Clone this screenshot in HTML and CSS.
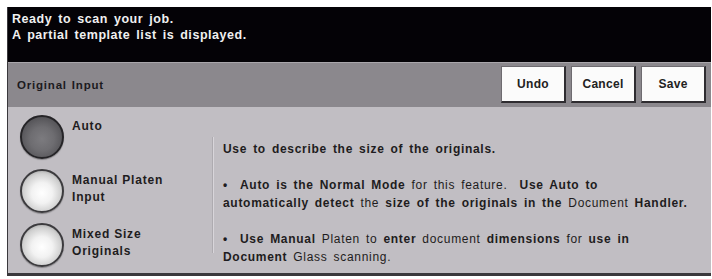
FILE: index.html
```html
<!DOCTYPE html>
<html>
<head>
<meta charset="utf-8">
<link rel="stylesheet" href="styles.css">
</head>
<body>
<div class="screen">
  <div class="status">
    <div>Ready to scan your job.</div>
    <div>A partial template list is displayed.</div>
  </div>
  <div class="header">
    <div class="title">Original Input</div>
    <div class="buttons">
      <div class="btn">Undo</div>
      <div class="btn">Cancel</div>
      <div class="btn">Save</div>
    </div>
  </div>
  <div class="body">
    <div class="options">
      <div class="opt">
        <div class="radio on"></div>
        <div class="label">Auto</div>
      </div>
      <div class="opt">
        <div class="radio"></div>
        <div class="label">Manual Platen<br>Input</div>
      </div>
      <div class="opt">
        <div class="radio"></div>
        <div class="label">Mixed Size<br>Originals</div>
      </div>
    </div>
    <div class="divider"></div>
    <div class="desc">
      <p>Use to describe the size of the originals.</p>
      <p><span class="dot">&bull;</span><b>Auto is the Normal Mode</b> <span class="reg">for this feature.</span>&nbsp; <b>Use Auto to</b><br><b>automatically detect</b> <span class="reg">the</span> <b>size of the originals in the</b> <span class="reg">Document</span> <b>Handler.</b></p>
      <p><span class="dot">&bull;</span><b>Use Manual</b> <span class="reg">Platen to</span> <b>enter</b> <span class="reg">document</span> <b>dimensions</b> <span class="reg">for</span> <b>use in</b><br><b>Document</b> <span class="reg">Glass scanning.</span></p>
    </div>
  </div>
</div>
</body>
</html>
```
FILE: styles.css
```css
html, body {
  margin: 0;
  padding: 0;
  background: #ffffff;
}
body {
  font-family: "Liberation Sans", Arial, sans-serif;
  font-size: 12px;
}
.screen {
  margin: 7px 2px 0 7px;
  width: 703px;
  border-left: 1px solid #3a383c;
  border-bottom: 3px solid #3a383c;
}
.status {
  background: #040206;
  color: #f0f0f0;
  font-weight: bold;
  font-size: 12.5px;
  letter-spacing: 0.55px;
  word-spacing: 2px;
  height: 56px;
  box-sizing: border-box;
  padding: 4px 0 0 4px;
  line-height: 16px;
  border-bottom: 1px solid #a9a6ab;
}
.header {
  background: #8b888d;
  height: 44px;
  display: flex;
  align-items: center;
  justify-content: space-between;
  padding: 0 5px 0 9px;
}
.title {
  color: #1c1a1e;
  font-weight: bold;
  font-size: 11.5px;
  letter-spacing: 0.8px;
  word-spacing: 1px;
}
.buttons {
  display: flex;
  gap: 5px;
  padding-bottom: 2px;
}
.btn {
  width: 62px;
  height: 34px;
  background: #fbfbfb;
  border: 1px solid #6e6b70;
  border-right: 2px solid #2e2c30;
  border-bottom: 2px solid #2e2c30;
  display: flex;
  align-items: center;
  justify-content: center;
  font-weight: bold;
  color: #222;
  font-size: 12px;
  letter-spacing: 0.3px;
}
.body {
  background: #c1bec3;
  height: 166px;
  display: flex;
}
.options {
  width: 192px;
  padding: 8px 0 0 12px;
  display: flex;
  flex-direction: column;
  gap: 8px;
}
.opt {
  display: flex;
  height: 46px;
}
.radio {
  flex: none;
  width: 44px;
  height: 44px;
  border-radius: 50%;
  box-sizing: border-box;
  border: 2px solid #3c3b3e;
  background: radial-gradient(circle at 50% 55%, #ffffff 0%, #f2f2f2 35%, #cfcfcf 65%, #8e8e8e 90%);
  box-shadow: 0 1px 1px rgba(0,0,0,0.3);
}
.radio.on {
  border-color: #252427;
  background: radial-gradient(circle at 50% 55%, #7c7b7f 0%, #6e6d71 40%, #58575b 70%, #3a393d 95%);
}
.label {
  margin-left: 8px;
  font-weight: bold;
  color: #1e1c20;
  line-height: 17px;
  padding-top: 3px;
  letter-spacing: 0.8px;
}
.divider {
  width: 1px;
  margin: 30px 0 20px 0;
  background: #d8d5da;
  border-left: 1px solid #aeabb0;
}
.desc {
  padding: 33px 0 0 9px;
  color: #1e1c20;
  line-height: 18px;
  letter-spacing: 0.7px;
  word-spacing: 2px;
}
.desc p {
  margin: 0 0 18px 0;
  font-weight: bold;
}
.desc .reg {
  font-weight: normal;
}
.dot {
  display: inline-block;
  width: 17px;
}
```
